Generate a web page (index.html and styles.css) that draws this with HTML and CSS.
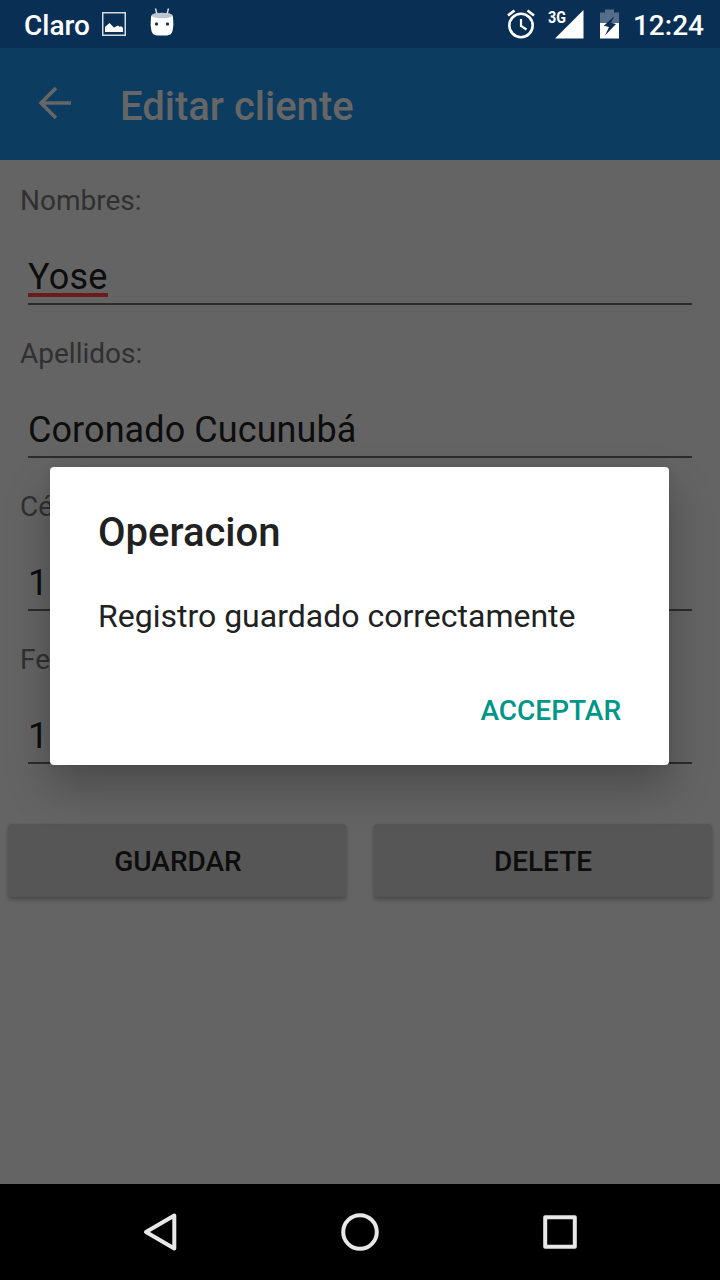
FILE: index.html
```html
<!DOCTYPE html>
<html lang="es">
<head>
<meta charset="utf-8">
<title>Editar cliente</title>
<link rel="stylesheet" href="styles.css">
</head>
<body>
<div class="screen">
  <header class="status">
    <span class="carrier">Claro</span>
    <svg class="ic-image" width="24" height="24" viewBox="0 0 24 24"><rect x=".75" y=".75" width="22.5" height="22.5" fill="none" stroke="#d3dae1" stroke-width="1.5"/><path d="M3 20V15L7.500 11L12 15.500L16 13.500L18 15L19 14L21 16V20Z" fill="#fff"/></svg>
    <svg class="ic-droid" width="24" height="28" viewBox="0 0 24 28"><path d="M5.500 .5L7.200 7M18.500 .5L16.800 7" stroke="#dfe4e9" stroke-width="1.400" fill="none"/><path d="M1 9Q1 5 12 5T23 9Q24 17 22.500 23Q21.500 27 17 27.500H7Q2.500 27 1.500 23Q0 17 1 9Z" fill="#fff"/><ellipse cx="12" cy="7.500" rx="10.500" ry="2.800" fill="#bdc7d1"/><rect x="5" y="14.500" width="3" height="3" rx="1" fill="#0a2f55"/><rect x="16" y="14.500" width="3" height="3" rx="1" fill="#0a2f55"/></svg>
    <span class="spacer"></span>
    <svg class="ic-alarm" width="28" height="30" viewBox="0 0 28 30"><g fill="none" stroke="#fff"><circle cx="14" cy="16.500" r="11.700" stroke-width="2.600"/><path d="M14 10V17L19.500 20.500" stroke-width="2.200"/><path d="M1 6.500L7.500 1.500M27 6.500L20.500 1.500" stroke-width="2.800"/></g></svg>
    <svg class="ic-signal" width="36" height="30" viewBox="0 0 36 30"><path d="M7 29.500L35.500 1V29.500Z" fill="#fff"/><text x="0" y="14" textLength="18" lengthAdjust="spacingAndGlyphs" class="net">3G</text></svg>
    <svg class="ic-battery" width="20" height="30" viewBox="0 0 20 30"><path d="M0 3.500H5V.5H14V3.500H19V14H0Z" fill="#546d88"/><path d="M0 14H19V29.500H0Z" fill="#fff"/><path d="M14.500 7L3.800 16.800L9 18L5 26.500L16 15L11 13.800Z" fill="#0a2f55"/></svg>
    <span class="clock">12:24</span>
  </header>
  <div class="appbar">
    <svg width="34" height="34" viewBox="0 0 34 34"><path d="M33 17H4M18 2L3 17L18 32" fill="none" stroke="#666" stroke-width="3.600"/></svg>
    <h1>Editar cliente</h1>
  </div>
  <main class="form">
    <section class="field"><label>Nombres:</label><div class="input"><span class="misspelt">Yose</span></div></section>
    <section class="field"><label>Apellidos:</label><div class="input">Coronado Cucunubá</div></section>
    <section class="field"><label>Cé</label><div class="input">11</div></section>
    <section class="field"><label>Fe</label><div class="input">1</div></section>
    <div class="actions"><button>GUARDAR</button><button>DELETE</button></div>
  </main>
  <nav class="nav">
    <svg width="40" height="40" viewBox="0 0 40 40"><path d="M34.300 3.500V36.500L6 20Z"/></svg>
    <svg width="40" height="40" viewBox="0 0 40 40"><circle cx="20" cy="20" r="16.800"/></svg>
    <svg width="40" height="40" viewBox="0 0 40 40"><rect x="5.200" y="5.200" width="29.600" height="29.600"/></svg>
  </nav>
  <div class="dialog" role="dialog">
    <h2>Operacion</h2>
    <p>Registro guardado correctamente</p>
    <a class="accept">ACCEPTAR</a>
  </div>
</div>
</body>
</html>
```
FILE: styles.css
```css
* { box-sizing: border-box; margin: 0; }
body { font-family: Roboto, sans-serif; background: #646464; }
svg { display: block; flex: none; }
.screen { position: relative; width: 720px; height: 1280px; overflow: hidden; display: flex; flex-direction: column; background: #646464; }

.status { height: 48px; flex: none; display: flex; align-items: flex-start; padding: 0 16px 0 24px; background: #0a2f55; color: #fff; font-size: 28px; font-weight: 500; line-height: 52px; white-space: nowrap; }
.carrier { width: 78px; }
.ic-image { margin-top: 12px; }
.ic-droid { margin: 8px 0 0 24px; }
.spacer { flex: 1; }
.ic-alarm { margin: 9px 13px 0 0; }
.ic-signal { margin: 9px 16px 0 0; }
.ic-battery { margin: 9px 13px 0 0; }
.net { font-size: 16px; font-weight: 700; fill: #fff; }

.appbar { height: 112px; flex: none; display: flex; align-items: center; padding-left: 38px; background: #0d3c61; color: #666; }
.appbar svg { margin-top: -2px; }
.appbar h1 { margin: 6px 0 0 48px; font-size: 40px; font-weight: 500; line-height: 48px; white-space: nowrap; }

.form { flex: 1; padding-top: 24px; }
.field { height: 153px; padding: 0 28px; }
.field label { display: block; margin-left: -8px; font-size: 28px; line-height: 33px; color: #303030; }
.input { height: 88px; padding-top: 39px; border-bottom: 2px solid #2b2b2b; font-size: 36px; line-height: 43px; letter-spacing: .08px; color: #0d0d0d; }
.misspelt { display: inline-block; height: 41px; letter-spacing: .25px; border-bottom: 4px solid #6b1c1a; }
.actions { display: grid; grid-template-columns: 338px 338px; justify-content: space-between; padding: 28px 8px 0; }
.actions button { height: 73px; border: 0; border-radius: 4px; background: #565656; box-shadow: 0 3px 4px rgba(0,0,0,.24), 0 0 2px rgba(0,0,0,.08); color: #0d0d0d; font: 500 28px Roboto, sans-serif; padding: 2px 0 0 2px; }
.actions button + button { padding-left: 0; }

.nav { height: 96px; flex: none; display: flex; justify-content: center; align-items: center; gap: 160px; background: #000; }
.nav svg { fill: none; stroke: #e8e8e8; stroke-width: 4; stroke-linejoin: round; }

.dialog { position: absolute; left: 50px; top: 467px; width: 619px; height: 298px; padding: 42px 48px 0; border-radius: 4px; background: #fff; box-shadow: 0 22px 44px rgba(0,0,0,.26), 0 0 8px rgba(0,0,0,.08); color: #212121; display: flex; flex-direction: column; }
.dialog h2 { font-size: 40px; font-weight: 500; line-height: 48px; }
.dialog p { margin-top: 39px; font-size: 32px; line-height: 40px; white-space: nowrap; }
.accept { align-self: flex-end; margin-top: 58px; color: #009688; font-size: 28px; font-weight: 500; line-height: 34px; }
```
